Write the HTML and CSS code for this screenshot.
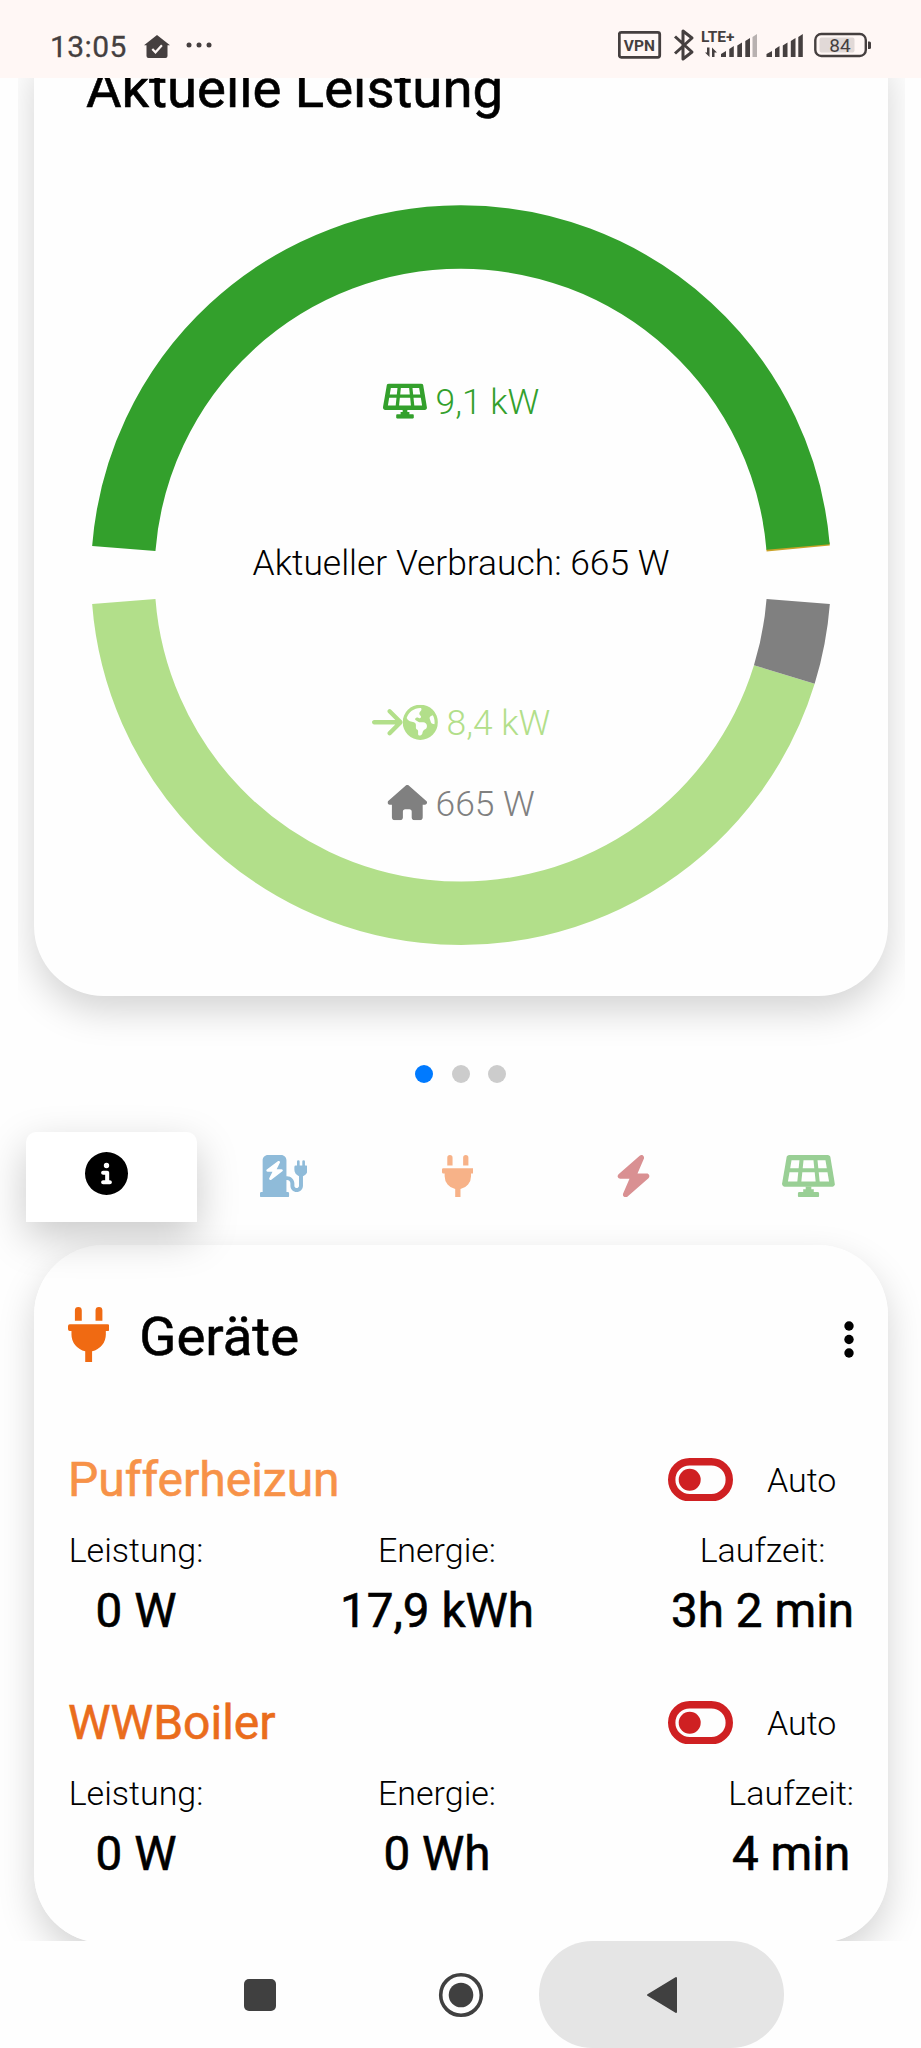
FILE: index.html
```html
<!DOCTYPE html>
<html lang="de">
<head>
<meta charset="utf-8">
<title>Aktuelle Leistung</title>
<link rel="stylesheet" href="styles.css">
</head>
<body>
<svg width="0" height="0" class="defs">
  <symbol id="plug" viewBox="0 0 384 512"><path d="M320,32a32,32,0,0,0-64,0v96h64Zm48,128H16A16,16,0,0,0,0,176v32a16,16,0,0,0,16,16H32v32A160.07,160.07,0,0,0,160,412.8V512h64V412.8A160.07,160.07,0,0,0,352,256V224h16a16,16,0,0,0,16-16V176A16,16,0,0,0,368,160ZM128,32a32,32,0,0,0-64,0v96h64Z"/></symbol>
  <symbol id="solar" viewBox="0 0 640 512"><path d="M431.98 448.01l-47.97.05V416h-128v32.21l-47.98.05c-8.82.01-15.97 7.16-15.98 15.99l-.05 31.73c-.01 8.85 7.17 16.03 16.02 16.02l223.96-.26c8.82-.01 15.97-7.16 15.98-15.98l.04-31.73c.01-8.85-7.17-16.03-16.02-16.02zM585.2 26.74C582.58 11.31 568.99 0 553.06 0H86.93C71 0 57.41 11.31 54.79 26.74-3.32 369.16.04 348.08.03 352c-.03 17.32 14.29 32 32.6 32h574.74c18.23 0 32.51-14.56 32.59-31.79.02-4.08 3.35 16.95-54.76-325.47zM259.83 64h120.33l9.77 96H250.06l9.77-96zm-75.17 256H71.09L90.1 208h105.97l-11.41 112zm16.16-160H98.24l16.29-96h96.19l-9.9 96zm32.82 160l11.4-112h149.92l11.41 112H233.64zm195.5-256h96.19l16.29 96H438.83l-9.69-96zm26.17 256l-11.4-112h105.97l19.01 112H455.31z"/><path d="M286 380h68v80h-68z"/></symbol>
  <symbol id="bolt" viewBox="0 0 448 512"><path d="M349.4 44.6c5.9-13.7 1.5-29.7-10.6-38.5s-28.6-8-39.9 1.8l-256 224c-10 8.8-13.6 22.9-8.9 35.3S50.7 288 64 288H175.5L98.6 467.4c-5.9 13.7-1.5 29.7 10.6 38.5s28.6 8 39.9-1.8l256-224c10-8.8 13.6-22.9 8.9-35.3s-16.6-20.7-30-20.7H272.5L349.4 44.6z"/></symbol>
  <symbol id="charger" viewBox="0 0 576 512"><path d="M336 448H16a16 16 0 0 0-16 16v32a16 16 0 0 0 16 16h320a16 16 0 0 0 16-16v-32a16 16 0 0 0-16-16zM544 128V80a16 16 0 0 0-32 0v48h-32V80a16 16 0 0 0-32 0v48h-16a16 16 0 0 0-16 16v35.8c0 35.6 23.5 65.6 56 76.1V372c0 15-12 28-28 28s-28-13-28-28v-28c0-48.5-39.5-88-88-88h-8V64c0-35.300-28.700-64-64-64H96C60.700 0 32 28.700 32 64v384h288V304h8c22.100 0 40 17.900 40 40v28c0 42 34 76 76 76s76-34 76-76V255.900c32.500-10.500 56-40.500 56-76.100V144a16 16 0 0 0-16-16z"/><path fill="#fff" transform="translate(60 72) scale(.52 .45)" d="M349.4 44.6c5.9-13.7 1.5-29.7-10.6-38.5s-28.6-8-39.9 1.8l-256 224c-10 8.8-13.6 22.9-8.9 35.3S50.7 288 64 288H175.5L98.6 467.4c-5.9 13.7-1.500 29.700 10.600 38.500s28.600 8 39.900-1.800l256-224c10-8.800 13.600-22.900 8.900-35.300s-16.600-20.700-30-20.700H272.500L349.400 44.600z"/></symbol>
  <symbol id="info" viewBox="0 0 512 512"><path d="M256 512A256 256 0 1 0 256 0a256 256 0 1 0 0 512zM216 336h24V272H216c-13.3 0-24-10.7-24-24s10.7-24 24-24h48c13.3 0 24 10.7 24 24v88h8c13.3 0 24 10.7 24 24s-10.7 24-24 24H216c-13.3 0-24-10.7-24-24s10.7-24 24-24zm40-208a32 32 0 1 1 0 64 32 32 0 1 1 0-64z"/></symbol>
  <symbol id="arrow" viewBox="0 0 448 512"><path d="M438.6 278.6c12.5-12.5 12.5-32.8 0-45.3l-160-160c-12.5-12.5-32.8-12.5-45.3 0s-12.5 32.8 0 45.3L338.8 224 32 224c-17.7 0-32 14.3-32 32s14.3 32 32 32l306.7 0L233.4 393.4c-12.5 12.5-12.5 32.8 0 45.3s32.8 12.5 45.3 0l160-160z"/></symbol>
  <symbol id="earth" viewBox="0 0 512 512"><path d="M57.7 193l9.4 16.4c8.3 14.5 21.9 25.2 38 29.8L163 255.7c17.2 4.9 29 20.6 29 38.5v39.9c0 11 6.2 21 16 25.9s16 14.9 16 25.9v39c0 15.6 14.9 26.9 29.9 22.6c16.1-4.6 28.6-17.5 32.7-33.8l2.8-11.2c4.2-16.9 15.2-31.4 30.3-40l8.1-4.6c15-8.5 24.2-24.5 24.2-41.7v-8.3c0-12.7-5.1-24.9-14.1-33.9l-3.9-3.9c-9-9-21.2-14.1-33.9-14.1H257c-11.1 0-22.1-2.9-31.8-8.4l-34.5-19.7c-4.3-2.5-7.6-6.5-9.2-11.2c-3.2-9.6 1.1-20 10.2-24.5l5.9-3c6.6-3.3 14.3-3.9 21.3-1.5l23.2 7.7c8.2 2.7 17.2-.4 21.9-7.5c4.7-7 4.2-16.3-1.2-22.8l-13.6-16.3c-10-12-9.9-29.5 .3-41.3l15.7-18.3c8.8-10.3 10.2-25 3.5-36.7l-2.4-4.2c-3.5-.2-6.9-.3-10.4-.3C163.1 48 84.4 108.900 57.7 193zM464 256c0-36.8-9.6-71.4-26.4-101.5L412 164.8c-15.7 6.3-23.8 23.8-18.5 39.8l16.9 50.7c3.5 10.4 12 18.3 22.6 20.9l29.1 7.3c1.2-9 1.8-18.2 1.8-27.5zM0 256a256 256 0 1 1 512 0A256 256 0 1 1 0 256z"/></symbol>
  <symbol id="house" viewBox="0 0 576 512"><path d="M575.8 255.5c0 18-15 32.1-32 32.1h-32l.7 160.2c0 2.7-.2 5.4-.5 8.1V472c0 22.1-17.9 40-40 40H456c-1.1 0-2.2 0-3.3-.1c-1.4 .1-2.8 .1-4.200 .1H416 392c-22.1 0-40-17.9-40-40V448 384c0-17.7-14.3-32-32-32H256c-17.7 0-32 14.3-32 32v64 24c0 22.1-17.9 40-40 40H160 128.1c-1.5 0-3-.1-4.500-.2c-1.2 .1-2.400 .2-3.600 .2H104c-22.1 0-40-17.9-40-40V360c0-.9 0-1.9 .1-2.8V287.6H32c-18 0-32-14-32-32.1c0-9 3-17 10-24L266.400 8c7-7 15-8 22-8s15 2 21 7L564.800 231.500c8 7 12 15 11 24z"/></symbol>
  <symbol id="toggle" viewBox="0 0 65 43.400"><rect x="3.700" y="3.700" width="57.600" height="36" rx="18" fill="none" stroke="currentColor" stroke-width="7.400"/><circle cx="21.700" cy="21.700" r="11"/></symbol>
</svg>

<header class="status">
  <div class="status-left">
    <span class="clock">13:05</span>
    <svg class="home-app" viewBox="0 0 26 23"><path d="M13 0L26 10.300H23.500V21a2 2 0 0 1-2 2H4.500a2 2 0 0 1-2-2V10.300H0z"/><path d="M8.300 14l3.200 3.300 6.400-7" fill="none" stroke="#fff7f5" stroke-width="2.200"/></svg>
    <svg class="more" viewBox="0 0 26 6"><circle cx="3" cy="3" r="2.500"/><circle cx="13" cy="3" r="2.500"/><circle cx="23" cy="3" r="2.500"/></svg>
  </div>
  <svg class="status-icons" viewBox="618 26 254 36">
    <rect x="619.300" y="32.300" width="40.400" height="25" rx="2" fill="none" stroke="currentColor" stroke-width="2.800"/>
    <text x="639.300" y="50.600" class="vpn" text-anchor="middle">VPN</text>
    <path d="M675 36.500L692 52l-9 7V31l9 7-17 15.500" fill="none" stroke="currentColor" stroke-width="3" stroke-linejoin="round"/>
    <text x="701" y="42" class="lte">LTE+</text>
    <path d="M709.500 47.500v9.500l-4.500-4.500h2v-5zM712 57v-9.500l5 5h-2.500v4.500z"/>
    <path d="M721 57v-3l5-3v6zM729.300 57v-8l4.500-3v11zM737.300 57V45.500l4.700-3V57zM745.300 57V41l4.700-3v19z"/>
    <path opacity=".38" d="M752.500 57V37l4.500-3v23z"/>
    <path d="M766.500 57v-3l5.500-3v6zM775 57v-8l4.500-3v11zM782.800 57V45.500l4.700-3V57zM790.800 57V41l4.700-3v19zM798.300 57V37l4.500-3v23z"/>
    <rect x="815.300" y="34" width="50.500" height="22" rx="6" fill="none" stroke="currentColor" stroke-width="2.400"/>
    <rect x="819.500" y="37.500" width="35" height="15" rx="2" opacity=".16"/>
    <path d="M868 41.500h1.500a1.500 1.500 0 0 1 1.500 1.500v4.500a1.500 1.500 0 0 1-1.500 1.500H868z"/>
    <text x="840" y="52.300" class="battery" text-anchor="middle">84</text>
  </svg>
</header>

<main class="screen">
  <section class="slider">
    <article class="card power">
      <h1 class="title">Aktuelle Leistung</h1>
      <svg class="chart" viewBox="-371 -371 742 742">
        <g fill="none" stroke-width="63.500">
          <path stroke="#b2df8a" d="M-337.200 26.500A338.250 338.250 0 0 0 323.300 99.500"/>
          <path stroke="#808080" d="M323.300 99.500A338.250 338.250 0 0 0 337.200 26.500"/>
          <path stroke="#c9a227" d="M336.900 -29.500A338.250 338.250 0 0 1 337.200 -26.500"/>
          <path stroke="#33a02c" d="M-337.200 -26.500A338.250 338.250 0 0 1 337.050 -28"/>
        </g>
        <g fill="#33a02c"><use href="#solar" x="-78" y="-191.500" width="44" height="35.200"/><text x="-25.500" y="-160.700">9,1 kW</text></g>
        <text x="0" y="0" text-anchor="middle">Aktueller Verbrauch: 665 W</text>
        <g fill="#b2df8a"><use href="#arrow" x="-89" y="129.700" width="30.800" height="35.200"/><use href="#earth" x="-58.300" y="129.700" width="35.200" height="35.200"/><text x="-14.500" y="160.300">8,4 kW</text></g>
        <g fill="#808080"><use href="#house" x="-73.500" y="210" width="39.600" height="35.200"/><text x="-25.500" y="241.200">665 W</text></g>
      </svg>
    </article>
  </section>

  <div class="pages"><i class="page on"></i><i class="page"></i><i class="page"></i></div>

  <nav class="tabs">
    <a class="tab active"><svg width="43" height="43"><use href="#info"/></svg></a>
    <a class="tab blue"><svg width="47.600" height="42.300"><use href="#charger"/></svg></a>
    <a class="tab orange"><svg width="31.700" height="42.300"><use href="#plug"/></svg></a>
    <a class="tab red"><svg width="37" height="42.300"><use href="#bolt"/></svg></a>
    <a class="tab green"><svg width="53" height="42.300"><use href="#solar"/></svg></a>
  </nav>

  <section class="card devices">
    <header class="devices-head">
      <svg class="plug" width="41.300" height="55"><use href="#plug"/></svg>
      <h2 class="title">Geräte</h2>
      <svg class="menu" viewBox="0 0 10 37"><circle cx="5" cy="5" r="4.700"/><circle cx="5" cy="18.500" r="4.700"/><circle cx="5" cy="32" r="4.700"/></svg>
    </header>
    <article class="device">
      <div class="device-head"><h3 class="name pale">Pufferheizun</h3><svg class="toggle"><use href="#toggle"/></svg><span class="mode">Auto</span></div>
      <dl class="stats">
        <div class="stat"><dt>Leistung:</dt><dd>0 W</dd></div>
        <div class="stat"><dt>Energie:</dt><dd>17,9 kWh</dd></div>
        <div class="stat last"><dt>Laufzeit:</dt><dd>3h 2 min</dd></div>
      </dl>
    </article>
    <article class="device">
      <div class="device-head"><h3 class="name">WWBoiler</h3><svg class="toggle"><use href="#toggle"/></svg><span class="mode">Auto</span></div>
      <dl class="stats">
        <div class="stat"><dt>Leistung:</dt><dd>0 W</dd></div>
        <div class="stat"><dt>Energie:</dt><dd>0 Wh</dd></div>
        <div class="stat last"><dt>Laufzeit:</dt><dd>4 min</dd></div>
      </dl>
    </article>
  </section>
</main>

<footer class="navbar">
  <div class="key"><svg width="32" height="32"><rect width="32" height="32" rx="5"/></svg></div>
  <div class="key"><svg width="46" height="46" viewBox="-23 -23 46 46"><circle r="20.300" fill="none" stroke="currentColor" stroke-width="3.600"/><circle r="12.300"/></svg></div>
  <div class="key pressed"><svg width="32" height="38" viewBox="0 0 32 38"><path d="M2 19L30 2V36z" stroke="currentColor" stroke-width="2" stroke-linejoin="round"/></svg></div>
</footer>
</body>
</html>
```
FILE: styles.css
```css
* { box-sizing: border-box; margin: 0; padding: 0; }
body {
  width: 921px;
  height: 2048px;
  overflow: hidden;
  display: flex;
  flex-direction: column;
  background: #fefefe;
  font-family: Roboto, "Noto Sans", sans-serif;
  font-size: 34px;
  color: #000;
}
svg { display: block; fill: currentColor; }
.defs { position: absolute; }

/* status bar */
.status {
  height: 78px;
  flex: none;
  display: flex;
  justify-content: space-between;
  align-items: flex-start;
  padding: 26px 49px 0 50px;
  background: #fff7f5;
  color: #453f3f;
}
.status-left { display: flex; align-items: center; height: 42px; }
.clock { width: 94px; font-size: 30px; line-height: 42px; letter-spacing: .4px; -webkit-text-stroke: .3px; }
.home-app { width: 26px; height: 23px; margin-top: -2px; }
.more { width: 26px; height: 6px; margin: -4px 0 0 16px; }
.status-icons { width: 254px; height: 36px; }
.vpn { font-size: 15.500px; font-weight: 700; }
.lte { font-size: 15.500px; font-weight: 700; }
.battery { font-size: 19px; }

.screen { flex: none; height: 1863px; overflow: hidden; }
.card { width: 854px; background: #fefefe; border-radius: 70px; box-shadow: 0 15px 36px rgba(0, 0, 0, .17); }
.title { font-size: 54.500px; line-height: 64px; font-weight: 400; -webkit-text-stroke: .6px; }

/* power card */
.slider { width: 887px; height: 969px; margin-left: 18px; padding-left: 16px; overflow: hidden; }
.power { height: 940px; margin-top: -22px; padding: 0 52px; border-radius: 0 0 70px 70px; }
.chart { width: 742px; height: 742px; margin: 83.500px 0 0 4px; font-size: 35.400px; font-weight: 300; }

.pages { display: flex; justify-content: center; gap: 18.300px; padding: 17.700px 0 0; height: 84.500px; }
.page { width: 18px; height: 18px; border-radius: 50%; background: #ccc; }
.page.on { background: #007aff; }

/* tabs */
.tabs { display: flex; gap: 4.500px; height: 113.500px; padding-left: 25.500px; }
.tab { width: 171px; height: 90px; display: flex; justify-content: center; padding: 23.500px 9px 0 0; }
.tab.active { padding-top: 20.500px; background: #fff; border-radius: 10px 10px 0 0; box-shadow: 0 15px 42px rgba(0, 0, 0, .21); }
.tab.blue { padding-right: 6px; color: #8fbbd9; }
.tab.orange { color: #f7b288; }
.tab.red { color: #d99092; }
.tab.green { color: #99cf95; }

/* devices card: slightly translucent, so the tab shadow shows through */
.devices { height: 698px; margin-left: 34px; padding: 58.500px 34px 0; background: rgba(254, 254, 254, .8); }
.devices-head { display: flex; align-items: center; height: 64px; margin-bottom: 82px; }
.plug { color: #f06a12; margin-top: -3px; }
.devices-head .title { flex: 1; margin-left: 30px; }
.menu { width: 10px; height: 37px; margin-top: 7px; }
.device { height: 243px; }
.device-head { display: flex; align-items: center; height: 60px; }
.name { flex: 1; font-size: 48px; line-height: 60px; font-weight: 400; color: #ea6c1c; -webkit-text-stroke: .6px; }
.name.pale { color: #f79248; }
.toggle { width: 65px; height: 43.400px; color: #cf2022; }
.mode { width: 121px; padding-left: 34px; font-weight: 300; }
.stats { display: grid; grid-template-columns: 136px 466px 184px; margin-top: 20px; }
.stat { text-align: center; }
.last { justify-self: end; }
.stats dt { font-weight: 300; line-height: 40px; }
.stats dd { margin-top: 11px; font-size: 47.600px; line-height: 60px; -webkit-text-stroke: .6px; }

/* system navigation */
.navbar { flex: none; display: flex; height: 107px; padding-left: 137px; background: #fefefe; color: #404040; }
.key { display: flex; align-items: center; justify-content: center; width: 245px; margin-right: -44px; border-radius: 54px; }
.key.pressed { background: #e5e5e5; }
```
